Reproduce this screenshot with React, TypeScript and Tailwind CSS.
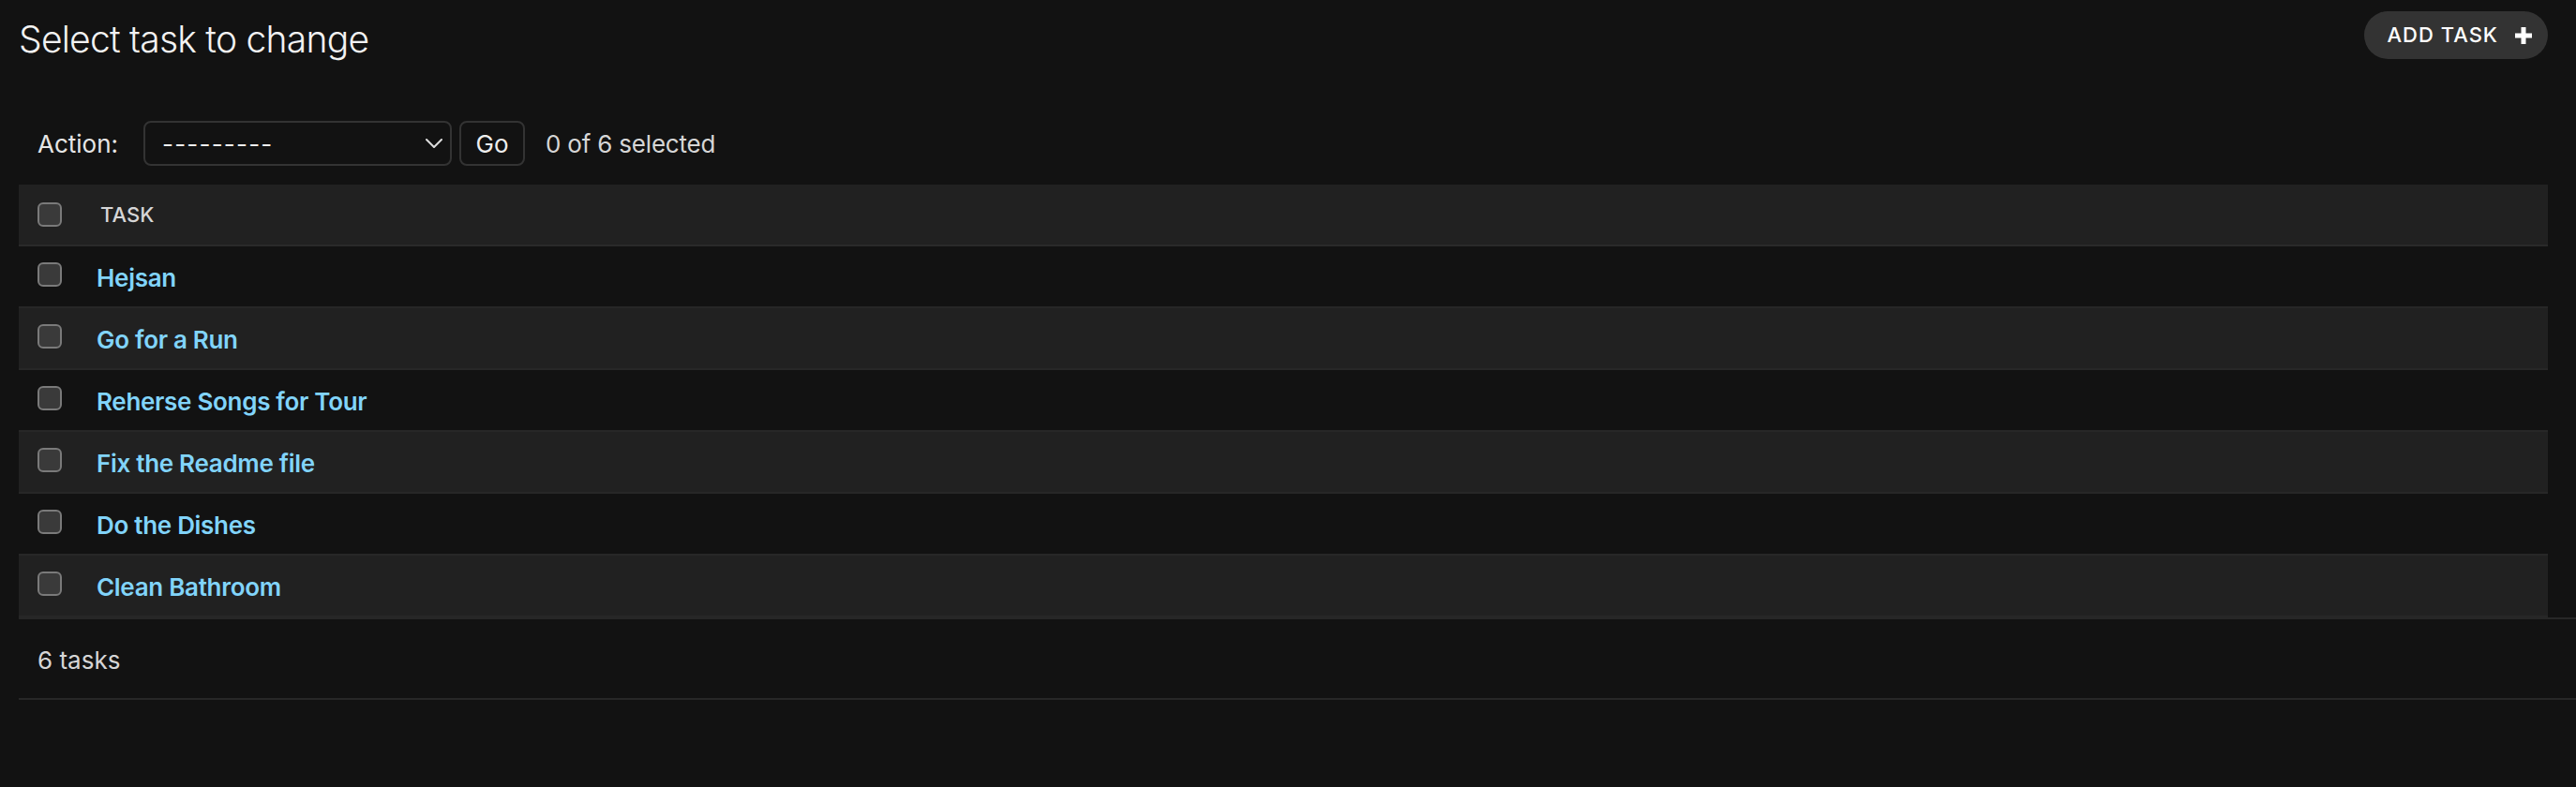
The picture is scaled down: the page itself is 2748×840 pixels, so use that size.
import React from 'react';

const tasks = [
  'Hejsan',
  'Go for a Run',
  'Reherse Songs for Tour',
  'Fix the Readme file',
  'Do the Dishes',
  'Clean Bathroom',
];

const Checkbox: React.FC<{ className?: string }> = ({ className = '' }) => (
  <div className={`w-[26px] h-[26px] shrink-0 rounded-[6px] border-2 border-[#7a7a7a] bg-[#3a3a3a] ${className}`} />
);

const PlusIcon = () => (
  <svg width="20" height="20" viewBox="0 0 20 20" className="shrink-0">
    <path d="M10 1 V19 M1 10 H19" stroke="#ffffff" strokeWidth="5" strokeLinecap="butt" />
  </svg>
);

const ChevronDown = () => (
  <svg width="18" height="10" viewBox="0 0 18 10" fill="none">
    <polyline points="1,1 9,9 17,1" stroke="#dddddd" strokeWidth="2" strokeLinejoin="round" strokeLinecap="round" />
  </svg>
);

const App: React.FC = () => {
  return (
    <div className="w-full min-h-[840px] bg-[#121212] font-['Inter','Liberation_Sans',sans-serif] text-[#eeeeee]">
      <div className="pl-[20px] pt-[12px]">
        {/* title + add button */}
        <div className="flex items-start justify-between h-[51px] pr-[30px]">
          <h1 className="mt-[6px] text-[39px] leading-[48px] font-light tracking-[-0.75px] text-[#f2f2f2]">
            Select task to change
          </h1>
          <button className="flex items-center h-[51px] pl-[24px] pr-[16px] gap-[17px] rounded-full bg-[#333333] text-white text-[22px] font-medium tracking-[1px]">
            ADD TASK
            <PlusIcon />
          </button>
        </div>

        {/* actions */}
        <div className="mt-[66px] flex items-center h-[48px] pl-[20px] text-[26px]">
          <span className="text-[#e6e6e6]">Action:</span>
          <div className="ml-[27px] w-[329px] h-[48px] flex items-center justify-between pl-[18px] pr-[8px] rounded-[8px] border-2 border-[#333333] bg-[#121212]">
            <span className="text-[#eeeeee] tracking-[1.2px]">---------</span>
            <ChevronDown />
          </div>
          <button className="ml-[8px] w-[70px] h-[48px] rounded-[8px] border-2 border-[#333333] bg-[#121212] text-[#eeeeee] text-[26px]">
            Go
          </button>
          <span className="ml-[22px] text-[#d6d6d6] tracking-[-0.2px]">0 of 6 selected</span>
        </div>

        {/* results table */}
        <div className="mt-[20px] mr-[30px]">
          <div className="flex items-center h-[66px] bg-[#212121] border-b-2 border-[#2a2a2a]">
            <Checkbox className="ml-[20px]" />
            <span className="ml-[41px] text-[22px] font-medium text-[#d6d6d6]">TASK</span>
          </div>
          {tasks.map((task, i) => (
            <div
              key={task}
              className={`flex items-center h-[66px] border-b-2 border-[#272727] ${i % 2 === 1 ? 'bg-[#212121]' : 'bg-[#121212]'}`}
            >
              <Checkbox className="ml-[20px] mb-[4px]" />
              <a className="ml-[37px] mt-[2px] text-[26px] font-semibold tracking-[-0.3px] text-[#81d4fa]">{task}</a>
            </div>
          ))}
        </div>

        {/* paginator */}
        <div className="flex items-center h-[88px] border-y-2 border-[#272727] pl-[20px]">
          <span className="mt-[2px] text-[26px] text-[#d6d6d6]">6 tasks</span>
        </div>
      </div>
    </div>
  );
};

export default App;
